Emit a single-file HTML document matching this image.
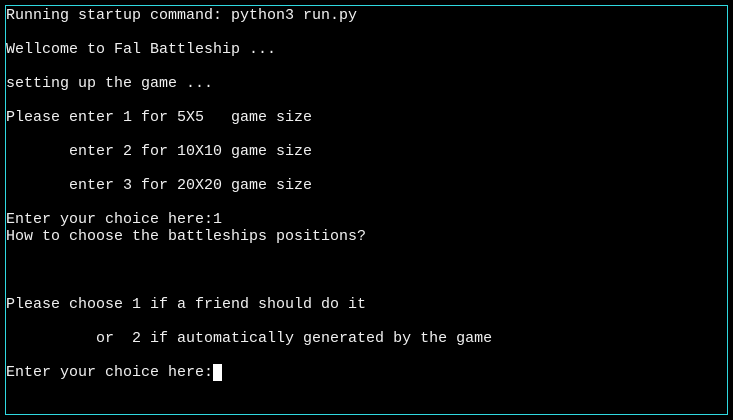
<!DOCTYPE html>
<html><head><style>
html,body{margin:0;padding:0;background:#000;width:733px;height:420px;overflow:hidden}
.b{position:absolute;left:5px;top:5px;width:721px;height:408px;border:1px solid #2fd8e0}
pre{position:absolute;left:6px;top:7px;margin:0;font:15px/17px "Liberation Mono",monospace;color:#f0f0f0}
.c{display:inline-block;width:9px;height:17px;background:#fff;vertical-align:top}
</style></head><body>
<div class="b"></div>
<pre>Running startup command: python3 run.py

Wellcome to Fal Battleship ...

setting up the game ...

Please enter 1 for 5X5   game size

       enter 2 for 10X10 game size

       enter 3 for 20X20 game size

Enter your choice here:1
How to choose the battleships positions?



Please choose 1 if a friend should do it

          or  2 if automatically generated by the game

Enter your choice here:<span class="c"></span></pre>
</body></html>
